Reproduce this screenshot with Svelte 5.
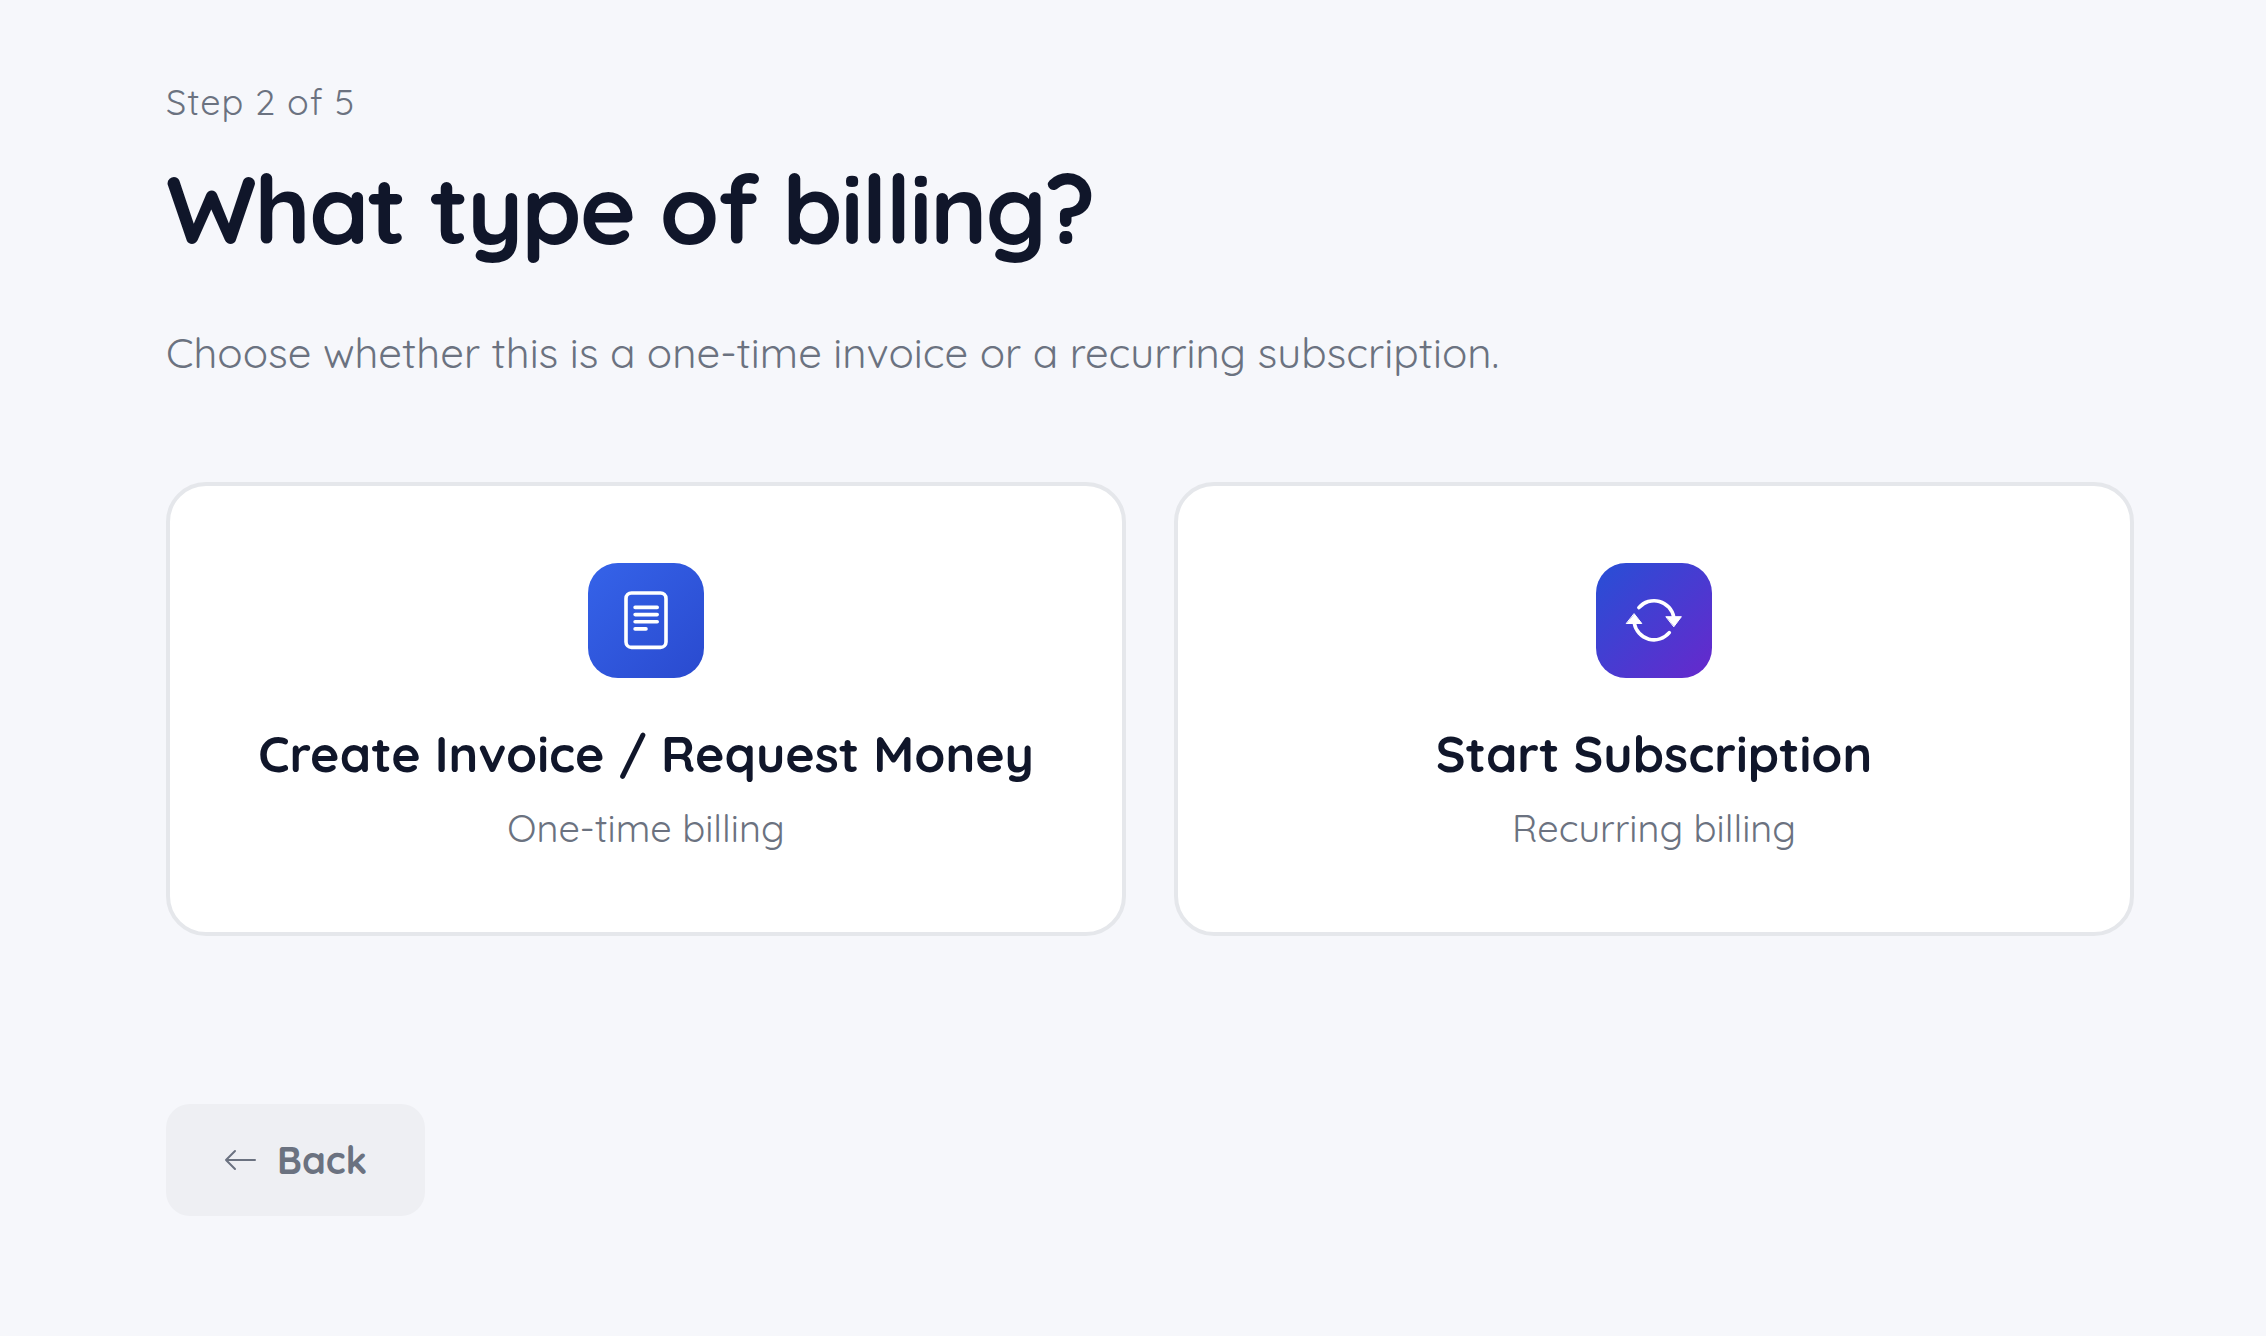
<script>
  let selected = $state("");

  const options = [
    {
      id: "invoice",
      title: "Create Invoice / Request Money",
      subtitle: "One-time billing",
    },
    {
      id: "subscription",
      title: "Start Subscription",
      subtitle: "Recurring billing",
    },
  ];
</script>

<main class="step">
  <p class="progress">Step 2 of 5</p>
  <h1>What type of billing?</h1>
  <p class="description">
    Choose whether this is a one-time invoice or a recurring subscription.
  </p>

  <div class="options">
    {#each options as option}
      <button
        type="button"
        class="card"
        aria-pressed={selected === option.id}
        onclick={() => (selected = option.id)}
      >
        <span class="icon {option.id}">
          {#if option.id === "invoice"}
            <svg viewBox="0 0 60 60" aria-hidden="true">
              <rect x="10" y="2" width="40" height="54.4" rx="5.5" />
              <path d="M19.1 16.4H41.2M19.1 23.6H41.2M19.1 30.7H41.2M19.1 37.9H30" />
            </svg>
          {:else}
            <svg viewBox="0 0 60 60" aria-hidden="true">
              <path d="M14.9 16.7A20 20 0 0 1 49.8 26.3" />
              <path d="M10.3 32.3A20 20 0 0 0 45.3 41.7" />
              <path class="head" d="M42.2 25.7H57.4L50 35.5Z" />
              <path class="head" d="M2.6 32.5H17.8L10.3 22.9Z" />
            </svg>
          {/if}
        </span>
        <span class="title">{option.title}</span>
        <span class="subtitle">{option.subtitle}</span>
      </button>
    {/each}
  </div>

  <button type="button" class="back">
    <svg viewBox="0 0 32 24" aria-hidden="true">
      <path d="M31 12H2M11 3L2 12L11 21" />
    </svg>
    Back
  </button>
</main>

<style>
  :global(body) {
    margin: 0;
    background: #f6f7fb;
  }

  .step {
    padding: 78px 132px 80px 166px;
    font-family: Quicksand, Lato, sans-serif;
    color: #6b7280;
  }

  p,
  h1 {
    margin: 0;
  }

  .progress {
    font-size: 36px;
    line-height: 48px;
    letter-spacing: 1px;
  }

  h1 {
    margin-top: 22px;
    font-size: 96px;
    line-height: 120px;
    font-weight: 700;
    letter-spacing: -0.02em;
    color: #10162a;
  }

  .description {
    margin-top: 55px;
    font-size: 42px;
    line-height: 60px;
  }

  .options {
    display: grid;
    grid-template-columns: 1fr 1fr;
    gap: 48px;
    margin-top: 99px;
  }

  button {
    font-family: inherit;
    color: inherit;
    cursor: pointer;
  }

  .card {
    display: flex;
    flex-direction: column;
    align-items: center;
    padding: 77px 40px 76px;
    border: 4px solid #e5e7eb;
    border-radius: 40px;
    background: #fff;
  }

  .icon {
    display: flex;
    align-items: center;
    justify-content: center;
    width: 116px;
    height: 115px;
    border-radius: 30px;
  }

  .icon.invoice {
    background: linear-gradient(135deg, #3563e9, #2a4acf);
  }

  .icon.subscription {
    background: linear-gradient(135deg, #274fd6, #6728cc);
  }

  svg {
    fill: none;
    stroke: currentColor;
    stroke-linecap: round;
    stroke-linejoin: round;
  }

  .icon svg {
    width: 60px;
    height: 60px;
    color: #fff;
    stroke-width: 3.6;
  }

  .icon .head {
    fill: currentColor;
    stroke-width: 1;
  }

  .title {
    margin-top: 42px;
    font-size: 50px;
    line-height: 68px;
    font-weight: 700;
    color: #10162a;
  }

  .subtitle {
    margin-top: 12px;
    font-size: 38px;
    line-height: 56px;
  }

  .back {
    display: flex;
    align-items: center;
    gap: 21px;
    margin-top: 168px;
    padding: 28px 58px;
    border: 0;
    border-radius: 24px;
    background: #eeeff3;
    font-size: 38px;
    line-height: 56px;
    font-weight: 700;
  }

  .back svg {
    width: 32px;
    height: 24px;
    stroke-width: 2;
  }
</style>
